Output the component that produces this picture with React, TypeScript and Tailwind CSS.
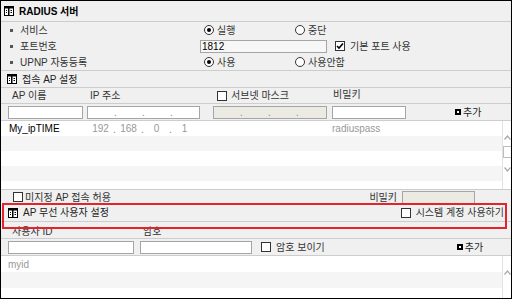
import React from "react";

/* =====================
   Small widgets
===================== */
function SectionIcon() {
  return (
    <svg width="10" height="10" viewBox="0 0 10 10" className="shrink-0">
      <rect x="0.5" y="0.5" width="9" height="9" fill="#fff" stroke="#000" />
      <rect x="1" y="1" width="8" height="1.5" fill="#000" />
      <rect x="4" y="1" width="1.5" height="8" fill="#000" />
      <rect x="2" y="4" width="1" height="1" fill="#000" />
      <rect x="2" y="6" width="1" height="1" fill="#000" />
      <rect x="6.5" y="4" width="1.5" height="1" fill="#000" />
      <rect x="6.5" y="6" width="1.5" height="1" fill="#000" />
    </svg>
  );
}

function Radio({ checked }: { checked?: boolean }) {
  return (
    <span className="w-[10px] h-[10px] rounded-full border border-[#333] bg-white flex items-center justify-center shrink-0">
      {checked && <span className="w-[4px] h-[4px] rounded-full bg-black" />}
    </span>
  );
}

function Checkbox({ checked }: { checked?: boolean }) {
  return (
    <span className="w-[10px] h-[10px] border border-[#333] bg-white flex items-center justify-center shrink-0">
      {checked && (
        <svg width="8" height="8" viewBox="0 0 8 8">
          <path d="M1 4 L3 6 L7 1.5" fill="none" stroke="#000" strokeWidth="1.6" />
        </svg>
      )}
    </span>
  );
}

function AddButton() {
  return (
    <span className="flex items-center gap-[2px] text-[#222]">
      <span className="w-[6px] h-[6px] bg-black flex items-center justify-center">
        <span className="w-[2px] h-[2px] bg-white" />
      </span>
      추가
    </span>
  );
}

function Input({ className, disabled }: { className: string; disabled?: boolean }) {
  return (
    <div
      className={`h-[13px] border border-[#a5a5a5] ${
        disabled ? "bg-[#ebebe4]" : "bg-white"
      } ${className}`}
    />
  );
}

function IpCells({ values, input, disabled }: { values?: string[]; input?: boolean; disabled?: boolean }) {
  const segs = values ?? ["", "", "", ""];
  return (
    <div
      className={`flex h-[13px] ${
        input ? `border border-[#a5a5a5] ${disabled ? "bg-[#ebebe4]" : "bg-white"}` : ""
      }`}
    >
      {segs.map((v, i) => (
        <React.Fragment key={i}>
          {i > 0 && (
            <span className="w-[1px] flex justify-center items-end leading-[10px] text-[#888]">.</span>
          )}
          <span className="w-[27px] text-center text-[#999] leading-[13px]">{v}</span>
        </React.Fragment>
      ))}
    </div>
  );
}

function Chevron({ up }: { up?: boolean }) {
  return (
    <svg width="7" height="5" viewBox="0 0 7 5" className="block">
      <path
        d={up ? "M0.5 4.5 L3.5 1 L6.5 4.5" : "M0.5 0.5 L3.5 4 L6.5 0.5"}
        fill="none"
        stroke="#a8a8a8"
        strokeWidth="1.2"
      />
    </svg>
  );
}

function ScrollStrip({ thumb }: { thumb?: boolean }) {
  return (
    <div className="w-[9px] border-l border-[#e2e2e2] bg-white flex flex-col items-center">
      <span className="mt-[14px]">
        <Chevron up />
      </span>
      {thumb && (
        <>
          <span className="mt-[6px] w-[10px] h-[12px] border border-[#bdbdbd] bg-white self-start" />
          <span className="mt-[9px]">
            <Chevron />
          </span>
        </>
      )}
    </div>
  );
}

function SectionHeader({ title, bold, className, right }: { title: string; bold?: boolean; className: string; right?: React.ReactNode }) {
  return (
    <div className={`flex items-center border-b border-[#cdcdcd] ${className}`}>
      <SectionIcon />
      <span className={`ml-[5px] ${bold ? "font-bold text-black" : "text-[#222]"}`}>{title}</span>
      {right}
    </div>
  );
}

export default function App() {
  return (
    <div className="w-[512px] h-[299px] border border-black bg-[#f0f0f0] overflow-hidden relative text-[10px] text-[#333] font-['Liberation_Sans','Noto_Sans_CJK_KR',sans-serif]">
      {/* RADIUS 서버 */}
      <SectionHeader title="RADIUS 서버" bold className="h-[21px] pl-[3px]" />

      <div className="h-[49px] border-b border-[#cdcdcd]">
        <div className="h-[16px] flex items-center">
          <div className="w-[203px] flex items-center pl-[9px]">
            <span className="w-[3px] h-[3px] bg-[#555]" />
            <span className="ml-[7px]">서비스</span>
          </div>
          <div className="w-[91px] flex items-center gap-[3px]">
            <Radio checked />
            <span>실행</span>
          </div>
          <div className="flex items-center gap-[3px]">
            <Radio />
            <span>중단</span>
          </div>
        </div>
        <div className="h-[16px] flex items-center">
          <div className="w-[199px] flex items-center pl-[9px]">
            <span className="w-[3px] h-[3px] bg-[#555]" />
            <span className="ml-[7px]">포트번호</span>
          </div>
          <div className="w-[127px] h-[13px] border border-[#a5a5a5] bg-[#f7f7f7] pl-[1px] leading-[11px] text-black">
            1812
          </div>
          <div className="ml-[8px] flex items-center gap-[5px]">
            <Checkbox checked />
            <span>기본 포트 사용</span>
          </div>
        </div>
        <div className="h-[16px] flex items-center">
          <div className="w-[203px] flex items-center pl-[9px]">
            <span className="w-[3px] h-[3px] bg-[#555]" />
            <span className="ml-[7px]">UPNP 자동등록</span>
          </div>
          <div className="w-[91px] flex items-center gap-[3px]">
            <Radio checked />
            <span>사용</span>
          </div>
          <div className="flex items-center gap-[3px]">
            <Radio />
            <span>사용안함</span>
          </div>
        </div>
      </div>

      {/* 접속 AP 설정 */}
      <SectionHeader title="접속 AP 설정" className="h-[17px] pl-[6px]" />

      <div className="h-[16px] flex items-center border-b border-[#cdcdcd]">
        <span className="w-[89px] pl-[11px]">AP 이름</span>
        <span className="w-[127px]">IP 주소</span>
        <div className="w-[116px] flex items-center gap-[4px]">
          <Checkbox />
          <span>서브넷 마스크</span>
        </div>
        <span className="-mt-[3px]">비밀키</span>
      </div>

      <div className="h-[17px] flex items-center border-b border-[#cdcdcd]">
        <Input className="ml-[7px] w-[75px]" />
        <div className="ml-[4px] w-[113px]">
          <IpCells input />
        </div>
        <div className="ml-[13px] w-[114px]">
          <IpCells input disabled />
        </div>
        <Input className="ml-[5px] w-[74px]" />
        <div className="ml-[49px]">
          <AddButton />
        </div>
      </div>

      <div className="h-[69px] flex border-b border-[#cdcdcd] bg-white">
        <div className="flex-1 flex flex-col">
          <div className="h-[15px] flex items-center">
            <span className="w-[86px] pl-[8px] text-black">My_ipTIME</span>
            <div className="w-[113px]">
              <IpCells values={["192", "168", "0", "1"]} />
            </div>
            <span className="ml-[132px] text-[#999]">radiuspass</span>
          </div>
          <div className="h-[15px] bg-[#f5f5f5]" />
          <div className="h-[15px]" />
          <div className="h-[15px] bg-[#f5f5f5]" />
        </div>
        <ScrollStrip thumb />
      </div>

      {/* 미지정 AP */}
      <div className="h-[14px] flex items-center">
        <div className="ml-[12px] flex items-center gap-[2px]">
          <Checkbox />
          <span>미지정 AP 접속 허용</span>
        </div>
        <span className="ml-auto">비밀키</span>
        <Input className="ml-[5px] mr-[36px] w-[73px] h-[12px]" disabled />
      </div>

      {/* AP 무선 사용자 설정 */}
      <SectionHeader
        title="AP 무선 사용자 설정"
        className="h-[18px] pl-[7px]"
        right={
          <div className="ml-auto mr-[7px] flex items-center gap-[5px]">
            <Checkbox />
            <span>시스템 계정 사용하기</span>
          </div>
        }
      />

      <div className="h-[17px] flex items-center border-b border-[#cdcdcd]">
        <span className="w-[142px] pl-[11px] mt-[2px]">사용자 ID</span>
        <span className="mt-[2px]">암호</span>
      </div>

      <div className="h-[17px] flex items-center border-b border-[#cdcdcd]">
        <Input className="ml-[7px] w-[126px]" />
        <Input className="ml-[6px] w-[112px]" />
        <div className="ml-[9px] flex items-center gap-[5px]">
          <Checkbox />
          <span>암호 보이기</span>
        </div>
        <div className="ml-[132px]">
          <AddButton />
        </div>
      </div>

      <div className="h-[42px] flex bg-white">
        <div className="flex-1 flex flex-col">
          <div className="h-[16px] flex items-center pl-[7px] text-[#999]">myid</div>
          <div className="h-[16px] bg-[#f5f5f5]" />
        </div>
        <ScrollStrip />
      </div>

      {/* highlight */}
      <div className="absolute left-[1px] top-[202px] w-[505px] h-[26px] border-2 border-[#e3242b]" />
    </div>
  );
}
